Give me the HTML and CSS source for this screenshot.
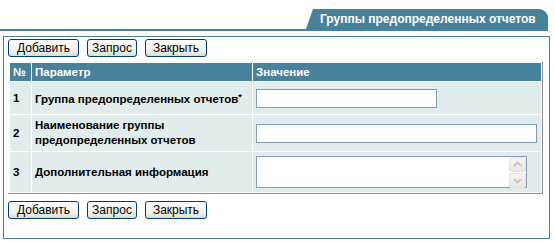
FILE: index.html
```html
<!DOCTYPE html>
<html lang="ru">
<head>
    <meta charset="UTF-8">
    <title>Группы предопределенных отчетов</title>
    <link rel="stylesheet" href="styles.css">
</head>
<body>

<div class="titlebar">
    <div class="tab">Группы предопределенных отчетов</div>
</div>

<div class="panel">
    <div class="buttons">
        <button class="btn">Добавить</button>
        <button class="btn">Запрос</button>
        <button class="btn">Закрыть</button>
    </div>

    <table class="grid">
        <tr class="head">
            <th class="num">№</th>
            <th class="param">Параметр</th>
            <th>Значение</th>
        </tr>
        <tr class="row1">
            <td class="num">1</td>
            <td class="param">Группа предопределенных отчетов<span class="req">*</span></td>
            <td><input type="text" class="short"></td>
        </tr>
        <tr class="row2">
            <td class="num">2</td>
            <td class="param">Наименование группы<br>предопределенных отчетов</td>
            <td><input type="text" class="wide"></td>
        </tr>
        <tr class="row3">
            <td class="num">3</td>
            <td class="param">Дополнительная информация</td>
            <td>
                <div class="memo">
                    <textarea></textarea>
                    <div class="scroll">
                        <span class="arrow"><svg width="13" height="13" viewBox="0 0 13 13"><path d="M3 8 L6.5 4.5 L10 8" fill="none" stroke="#c6c6bd" stroke-width="2"/></svg></span>
                        <span class="arrow"><svg width="13" height="13" viewBox="0 0 13 13"><path d="M3 5 L6.5 8.5 L10 5" fill="none" stroke="#c6c6bd" stroke-width="2"/></svg></span>
                    </div>
                </div>
            </td>
        </tr>
    </table>

    <div class="buttons">
        <button class="btn">Добавить</button>
        <button class="btn">Запрос</button>
        <button class="btn">Закрыть</button>
    </div>
</div>

</body>
</html>
```

FILE: styles.css
```css
body {
    margin: 0;
    font-family: "Liberation Sans", Arial, sans-serif;
    font-size: 12px;
    background-color: #fff;
}
.titlebar {
    display: flex;
    justify-content: flex-end;
    align-items: flex-end;
    width: 548px;
    height: 29px;
    border-bottom: 2px solid #47819a;
}
.tab {
    width: 242px;
    box-sizing: border-box;
    height: 20px;
    line-height: 20px;
    padding-left: 14px;
    background-color: #47819a;
    color: #fff;
    font-weight: bold;
    font-size: 12px;
    white-space: nowrap;
    border-top-right-radius: 9px;
    clip-path: polygon(7px 0, 100% 0, 100% 100%, 0 100%);
}
.panel {
    width: 541px;
    height: 199px;
    margin: 5px 0 0 3px;
    padding: 2px 0 0 4px;
    border: 1px solid #4b7d8e;
}
.buttons {
    display: flex;
    gap: 8px;
    height: 18px;
}
.btn {
    height: 18px;
    padding: 0;
    font-family: "Liberation Sans", Arial, sans-serif;
    font-size: 12px;
    color: #000;
    border: 1px solid #003c74;
    border-radius: 3px;
    background: linear-gradient(#fff, #f1f0ea 70%, #dcdad0);
}
.btn:nth-child(1) { width: 71px; }
.btn:nth-child(2) { width: 50px; }
.btn:nth-child(3) { width: 62px; }
.grid {
    width: 535px;
    margin: 4px 0 7px 0;
    border-collapse: separate;
    border-spacing: 1px;
    border: 1px solid;
    border-color: #fff #8c8c8c #8c8c8c #fff;
    font-size: 11.5px;
}
.grid th {
    height: 18px;
    padding: 0 3px;
    text-align: left;
    color: #fff;
    font-weight: bold;
    background-color: #47819a;
}
.grid td {
    padding: 0 3px;
    font-weight: bold;
    white-space: nowrap;
    background-color: #e1eded;
}
.grid .num {
    width: 15px;
}
.grid .param {
    width: 214px;
}
.req {
    font-size: 9px;
    vertical-align: 3px;
}
.row1 td { height: 32px; }
.row2 td { height: 36px; line-height: 15px; }
.row3 td { height: 40px; }
input {
    box-sizing: border-box;
    height: 19px;
    margin: 0;
    border: 1px solid #7f9db9;
    background: #fff;
    display: block;
}
input.short { width: 181px; }
input.wide { width: 281px; }
.memo {
    display: flex;
    width: 271px;
    height: 32px;
    box-sizing: border-box;
    border: 1px solid #7f9db9;
    background: #fff;
}
.memo textarea {
    flex: 1;
    border: none;
    resize: none;
    outline: none;
    padding: 0;
}
.scroll {
    display: flex;
    flex-direction: column;
    gap: 1px;
    width: 17px;
    background: #fff;
}
.arrow {
    display: flex;
    align-items: center;
    justify-content: center;
    height: 14px;
    border: 1px solid #e6e5dd;
    border-radius: 2px;
    background: linear-gradient(#f6f6f2, #e8e7e0);
}
```
